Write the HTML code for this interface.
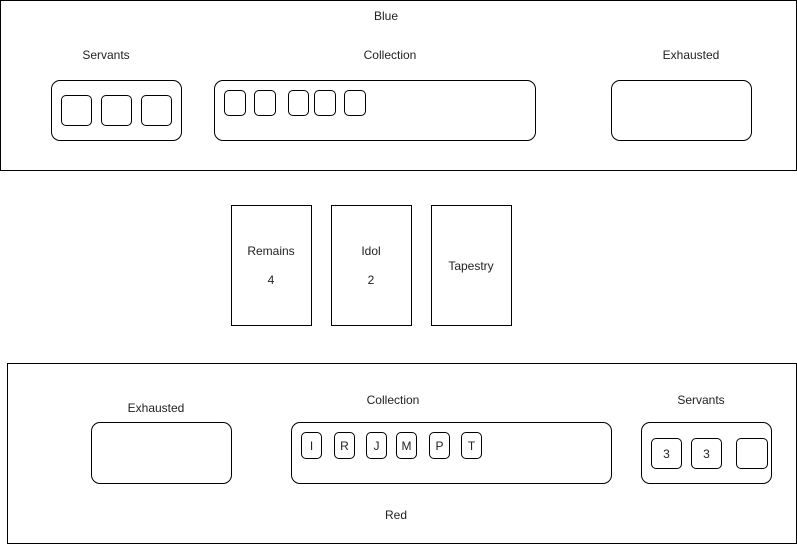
<!DOCTYPE html>
<html><head><meta charset="utf-8"><style>
*{margin:0;padding:0;box-sizing:border-box}
body{width:797px;height:544px;background:#fff;position:relative;overflow:hidden;font-family:"Liberation Sans",sans-serif;font-size:12px;color:#222}
.b{position:absolute;border:1px solid #000}
.r{border-radius:9px}
.s{border-radius:5px}
.t{position:absolute;width:200px;margin-left:-100px;text-align:center;line-height:14px}
.c{display:flex;align-items:center;justify-content:center;font-size:12px}
</style></head><body>
<div class="b" style="left:0;top:0;width:797px;height:171px"></div>
<div class="t" style="left:386px;top:9px">Blue</div>
<div class="t" style="left:106px;top:48px">Servants</div>
<div class="t" style="left:390px;top:48px">Collection</div>
<div class="t" style="left:691px;top:48px">Exhausted</div>
<div class="b r" style="left:51px;top:80px;width:131px;height:61px"></div>
<div class="b s" style="left:61px;top:95px;width:31px;height:31px"></div>
<div class="b s" style="left:101px;top:95px;width:31px;height:31px"></div>
<div class="b s" style="left:141px;top:95px;width:31px;height:31px"></div>
<div class="b r" style="left:214px;top:80px;width:322px;height:61px"></div>
<div class="b s" style="left:224px;top:90px;width:22px;height:26px"></div>
<div class="b s" style="left:254px;top:90px;width:22px;height:26px"></div>
<div class="b s" style="left:288px;top:90px;width:21px;height:26px"></div>
<div class="b s" style="left:314px;top:90px;width:22px;height:26px"></div>
<div class="b s" style="left:344px;top:90px;width:22px;height:26px"></div>
<div class="b r" style="left:611px;top:80px;width:141px;height:61px"></div>

<div class="b" style="left:231px;top:205px;width:81px;height:121px"></div>
<div class="b" style="left:331px;top:205px;width:81px;height:121px"></div>
<div class="b" style="left:431px;top:205px;width:81px;height:121px"></div>
<div class="t" style="left:271px;top:244px">Remains</div>
<div class="t" style="left:271px;top:273px">4</div>
<div class="t" style="left:371px;top:244px">Idol</div>
<div class="t" style="left:371px;top:273px">2</div>
<div class="t" style="left:471px;top:259px">Tapestry</div>

<div class="b" style="left:7px;top:363px;width:790px;height:181px"></div>
<div class="t" style="left:156px;top:401px">Exhausted</div>
<div class="t" style="left:393px;top:393px">Collection</div>
<div class="t" style="left:701px;top:393px">Servants</div>
<div class="t" style="left:396px;top:508px">Red</div>
<div class="b r" style="left:91px;top:422px;width:141px;height:62px"></div>
<div class="b r" style="left:291px;top:422px;width:321px;height:62px"></div>
<div class="b s c" style="left:301px;top:432px;width:21px;height:27px">I</div>
<div class="b s c" style="left:334px;top:432px;width:21px;height:27px">R</div>
<div class="b s c" style="left:366px;top:432px;width:21px;height:27px">J</div>
<div class="b s c" style="left:396px;top:432px;width:21px;height:27px">M</div>
<div class="b s c" style="left:429px;top:432px;width:21px;height:27px">P</div>
<div class="b s c" style="left:461px;top:432px;width:21px;height:27px">T</div>
<div class="b r" style="left:641px;top:422px;width:131px;height:62px"></div>
<div class="b s c" style="left:651px;top:438px;width:31px;height:31px">3</div>
<div class="b s c" style="left:691px;top:438px;width:31px;height:31px">3</div>
<div class="b s c" style="left:736px;top:438px;width:32px;height:31px"></div>
</body></html>
